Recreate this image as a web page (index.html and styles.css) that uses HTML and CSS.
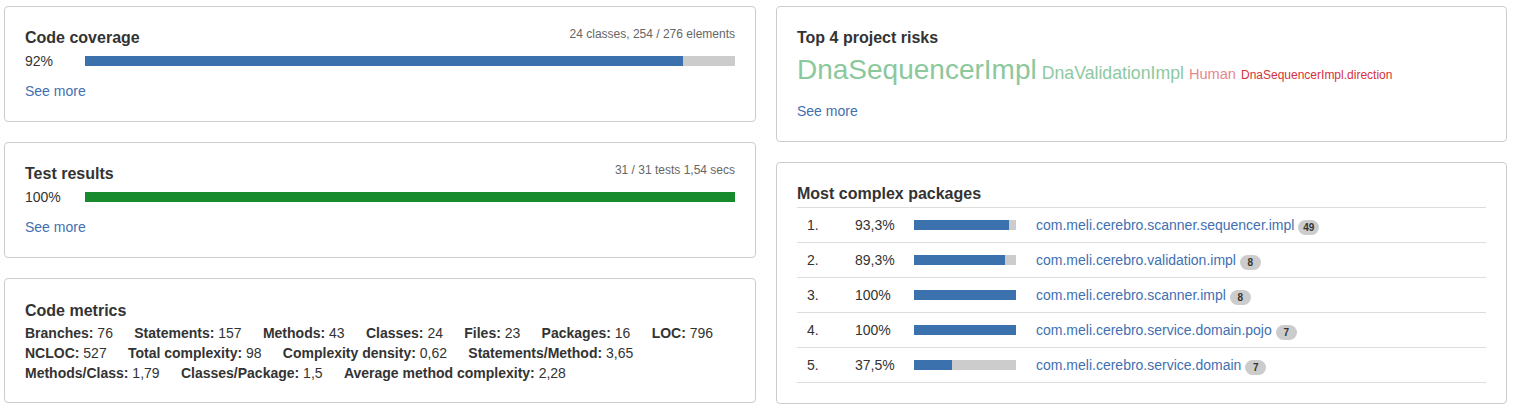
FILE: index.html
```html
<!DOCTYPE html>
<html lang="en">
<head>
<meta charset="utf-8">
<title>Project dashboard</title>
<link rel="stylesheet" href="styles.css">
</head>
<body>
<div class="dashboard">
  <div class="column column-left">
    <section class="card">
      <div class="card-head">
        <h2 class="card-title">Code coverage</h2>
        <span class="card-sub">24 classes, 254 / 276 elements</span>
      </div>
      <div class="progress-row">
        <span class="progress-label">92%</span>
        <div class="progress"><div class="progress-fill fill-blue" style="width:92%"></div></div>
      </div>
      <a class="see-more" href="#">See more</a>
    </section>

    <section class="card">
      <div class="card-head">
        <h2 class="card-title">Test results</h2>
        <span class="card-sub">31 / 31 tests 1,54 secs</span>
      </div>
      <div class="progress-row">
        <span class="progress-label">100%</span>
        <div class="progress"><div class="progress-fill fill-green" style="width:100%"></div></div>
      </div>
      <a class="see-more" href="#">See more</a>
    </section>

    <section class="card card-metrics">
      <div class="card-head">
        <h2 class="card-title">Code metrics</h2>
      </div>
      <div class="metrics">
        <span class="metric"><b>Branches:</b> 76</span>
        <span class="metric"><b>Statements:</b> 157</span>
        <span class="metric"><b>Methods:</b> 43</span>
        <span class="metric"><b>Classes:</b> 24</span>
        <span class="metric"><b>Files:</b> 23</span>
        <span class="metric"><b>Packages:</b> 16</span>
        <span class="metric"><b>LOC:</b> 796</span>
        <span class="metric"><b>NCLOC:</b> 527</span>
        <span class="metric"><b>Total complexity:</b> 98</span>
        <span class="metric"><b>Complexity density:</b> 0,62</span>
        <span class="metric"><b>Statements/Method:</b> 3,65</span>
        <span class="metric"><b>Methods/Class:</b> 1,79</span>
        <span class="metric"><b>Classes/Package:</b> 1,5</span>
        <span class="metric"><b>Average method complexity:</b> 2,28</span>
      </div>
    </section>
  </div>

  <div class="column column-right">
    <section class="card">
      <div class="card-head">
        <h2 class="card-title">Top 4 project risks</h2>
      </div>
      <div class="cloud">
        <a class="cloud-word w1" href="#">DnaSequencerImpl</a>
        <a class="cloud-word w2" href="#">DnaValidationImpl</a>
        <a class="cloud-word w3" href="#">Human</a>
        <a class="cloud-word w4" href="#">DnaSequencerImpl.direction</a>
      </div>
      <a class="see-more see-more-cloud" href="#">See more</a>
    </section>

    <section class="card">
      <div class="card-head">
        <h2 class="card-title">Most complex packages</h2>
      </div>
      <div class="pkg-table">
        <div class="pkg-row">
          <span class="cell">1.</span>
          <span class="cell">93,3%</span>
          <span class="cell cell-bar"><span class="mini-bar"><span class="mini-fill" style="width:93.3%"></span></span></span>
          <span class="cell"><a class="pkg-link" href="#">com.meli.cerebro.scanner.sequencer.impl</a> <span class="badge">49</span></span>
        </div>
        <div class="pkg-row">
          <span class="cell">2.</span>
          <span class="cell">89,3%</span>
          <span class="cell cell-bar"><span class="mini-bar"><span class="mini-fill" style="width:89.3%"></span></span></span>
          <span class="cell"><a class="pkg-link" href="#">com.meli.cerebro.validation.impl</a> <span class="badge">8</span></span>
        </div>
        <div class="pkg-row">
          <span class="cell">3.</span>
          <span class="cell">100%</span>
          <span class="cell cell-bar"><span class="mini-bar"><span class="mini-fill" style="width:100%"></span></span></span>
          <span class="cell"><a class="pkg-link" href="#">com.meli.cerebro.scanner.impl</a> <span class="badge">8</span></span>
        </div>
        <div class="pkg-row">
          <span class="cell">4.</span>
          <span class="cell">100%</span>
          <span class="cell cell-bar"><span class="mini-bar"><span class="mini-fill" style="width:100%"></span></span></span>
          <span class="cell"><a class="pkg-link" href="#">com.meli.cerebro.service.domain.pojo</a> <span class="badge">7</span></span>
        </div>
        <div class="pkg-row">
          <span class="cell">5.</span>
          <span class="cell">37,5%</span>
          <span class="cell cell-bar"><span class="mini-bar"><span class="mini-fill" style="width:37.5%"></span></span></span>
          <span class="cell"><a class="pkg-link" href="#">com.meli.cerebro.service.domain</a> <span class="badge">7</span></span>
        </div>
      </div>
    </section>
  </div>
</div>
</body>
</html>
```

FILE: styles.css
```css
* {
  box-sizing: border-box;
}

html, body {
  background: #ffffff;
}

body {
  margin: 0;
  padding: 6px 8px 0 4px;
  font-family: "Liberation Sans", Arial, Helvetica, sans-serif;
  font-size: 14px;
  line-height: 20px;
  color: #333333;
}

.dashboard {
  display: flex;
  gap: 20px;
  align-items: flex-start;
}

.column {
  display: flex;
  flex-direction: column;
  gap: 20px;
}

.column-left {
  width: 752px;
}

.column-right {
  width: 731px;
}

.card {
  border: 1px solid #cccccc;
  border-radius: 4px;
  background: #ffffff;
  padding: 21px 20px 20px;
}

.card-metrics {
  padding-top: 22px;
  padding-bottom: 19px;
}

.card-head {
  display: flex;
  justify-content: space-between;
  align-items: flex-start;
}

.card-title {
  margin: 0;
  font-size: 16px;
  line-height: 20px;
  font-weight: bold;
  color: #333333;
}

.card-sub {
  font-size: 12px;
  line-height: 12px;
  color: #666666;
}

.progress-row {
  display: flex;
  align-items: center;
  height: 20px;
  margin-top: 3px;
}

.progress-label {
  width: 60px;
  flex: none;
}

.progress {
  flex: 1;
  height: 10px;
  background: #cccccc;
}

.progress-fill {
  height: 100%;
}

.fill-blue {
  background: #3b72ad;
}

.fill-green {
  background: #178a2e;
}

.see-more {
  display: block;
  margin-top: 10px;
  color: #3f70b1;
  text-decoration: none;
  width: max-content;
}

.see-more-cloud {
  margin-top: 13px;
}

.metrics {
  display: flex;
  flex-wrap: wrap;
  column-gap: 21.3px;
  margin-top: 2px;
}

.metric b {
  font-weight: bold;
}

.cloud {
  display: flex;
  align-items: baseline;
  gap: 5px;
  height: 36px;
  line-height: 36px;
  margin-top: 4px;
}

.cloud-word {
  text-decoration: none;
}

.w1 {
  font-size: 28px;
  color: #8bc89c;
}

.w2 {
  font-size: 17.7px;
  color: #8dc99f;
}

.w3 {
  font-size: 14.6px;
  color: #e7878c;
}

.w4 {
  font-size: 12px;
  color: #d6323c;
}

.pkg-table {
  margin-top: 3px;
  border-bottom: 1px solid #dddddd;
}

.pkg-row {
  display: grid;
  grid-template-columns: 48px 59px 122px 1fr;
  border-top: 1px solid #dddddd;
}

.cell {
  padding: 7px 10px;
  line-height: 20px;
  white-space: nowrap;
}

.cell-bar {
  display: flex;
  align-items: center;
}

.mini-bar {
  display: block;
  width: 102px;
  height: 10px;
  background: #cccccc;
}

.mini-fill {
  display: block;
  height: 100%;
  background: #3b72ad;
}

.pkg-link {
  color: #3f70b1;
  text-decoration: none;
}

.badge {
  display: inline-block;
  min-width: 21px;
  height: 15px;
  padding: 0 5px;
  border-radius: 8px;
  background: #cccccc;
  color: #333333;
  font-size: 10px;
  font-weight: bold;
  line-height: 15px;
  text-align: center;
  vertical-align: -1px;
}
```
